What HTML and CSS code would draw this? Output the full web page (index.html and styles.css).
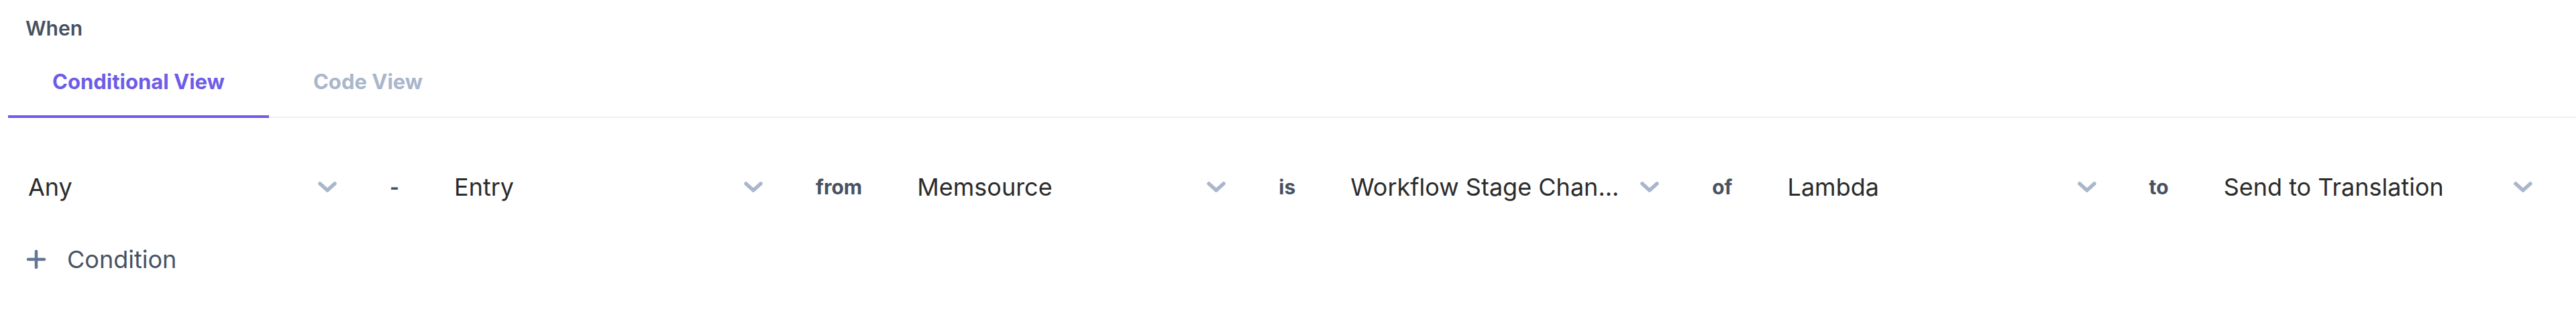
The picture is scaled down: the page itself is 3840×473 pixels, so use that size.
FILE: index.html
```html
<!DOCTYPE html>
<html lang="en">
<head>
  <meta charset="UTF-8" />
  <meta name="viewport" content="width=device-width, initial-scale=1.0"/>
  <title>When - Conditional View</title>
  <link rel="stylesheet" href="styles.css">
</head>
<body>
  <div class="rule-section">
    <div class="section-title">When</div>

    <div class="tabs">
      <div class="tab active">Conditional View</div>
      <div class="tab">Code View</div>
    </div>

    <div class="condition-row">
      <div class="select">
        <span class="select-value">Any</span>
        <svg class="chevron" viewBox="0 0 30 18"><path d="M4 4 L15 14 L26 4"/></svg>
      </div>
      <span class="operator">-</span>
      <div class="select">
        <span class="select-value">Entry</span>
        <svg class="chevron" viewBox="0 0 30 18"><path d="M4 4 L15 14 L26 4"/></svg>
      </div>
      <span class="operator">from</span>
      <div class="select">
        <span class="select-value">Memsource</span>
        <svg class="chevron" viewBox="0 0 30 18"><path d="M4 4 L15 14 L26 4"/></svg>
      </div>
      <span class="operator">is</span>
      <div class="select">
        <span class="select-value">Workflow Stage Chan...</span>
        <svg class="chevron" viewBox="0 0 30 18"><path d="M4 4 L15 14 L26 4"/></svg>
      </div>
      <span class="operator">of</span>
      <div class="select">
        <span class="select-value">Lambda</span>
        <svg class="chevron" viewBox="0 0 30 18"><path d="M4 4 L15 14 L26 4"/></svg>
      </div>
      <span class="operator">to</span>
      <div class="select">
        <span class="select-value">Send to Translation</span>
        <svg class="chevron" viewBox="0 0 30 18"><path d="M4 4 L15 14 L26 4"/></svg>
      </div>
    </div>

    <div class="add-condition">
      <svg class="plus" viewBox="0 0 30 30"><path d="M15 3 V27 M3 15 H27"/></svg>
      <span>Condition</span>
    </div>
  </div>
</body>
</html>
```

FILE: styles.css
```css
body {
  font-family: Inter, "Noto Sans", sans-serif;
  background-color: #ffffff;
  margin: 0;
}
.rule-section {
  padding: 24px 0 0 12px;
}
.section-title {
  font-size: 30px;
  line-height: 36px;
  font-weight: 600;
  color: #475161;
  padding-left: 26px;
}

/* tabs */
.tabs {
  display: flex;
  margin-top: 11px;
  border-bottom: 2px solid #edf1f5;
}
.tab {
  padding: 33px 66px 32px;
  font-size: 31px;
  line-height: 36px;
  font-weight: 700;
  color: #a9b6cb;
  border-bottom: 4px solid transparent;
  margin-bottom: -2px;
}
.tab.active {
  color: #6c5ce7;
  border-bottom-color: #6c5ce7;
}

/* condition row */
.condition-row {
  display: flex;
  align-items: center;
  margin-top: 63px;
}
.select {
  width: 517px;
  box-sizing: border-box;
  display: flex;
  align-items: center;
  justify-content: space-between;
  padding: 18px 26px 18px 30px;
  font-size: 36px;
  line-height: 44px;
  color: #2b2b2b;
}
.select-value {
  white-space: nowrap;
}
.chevron {
  width: 30px;
  height: 18px;
  flex-shrink: 0;
}
.chevron path {
  fill: none;
  stroke: #a9b6cb;
  stroke-width: 5.5;
  stroke-linecap: round;
  stroke-linejoin: round;
}
.operator {
  padding: 0 52px;
  font-size: 30px;
  line-height: 36px;
  font-weight: 700;
  color: #475161;
}

/* add condition */
.add-condition {
  display: flex;
  align-items: center;
  gap: 31px;
  margin-top: 46px;
  padding-left: 27px;
  font-size: 36px;
  line-height: 44px;
  color: #475161;
}
.plus {
  width: 30px;
  height: 30px;
}
.plus path {
  fill: none;
  stroke: #647696;
  stroke-width: 4.5;
  stroke-linecap: round;
}
```
